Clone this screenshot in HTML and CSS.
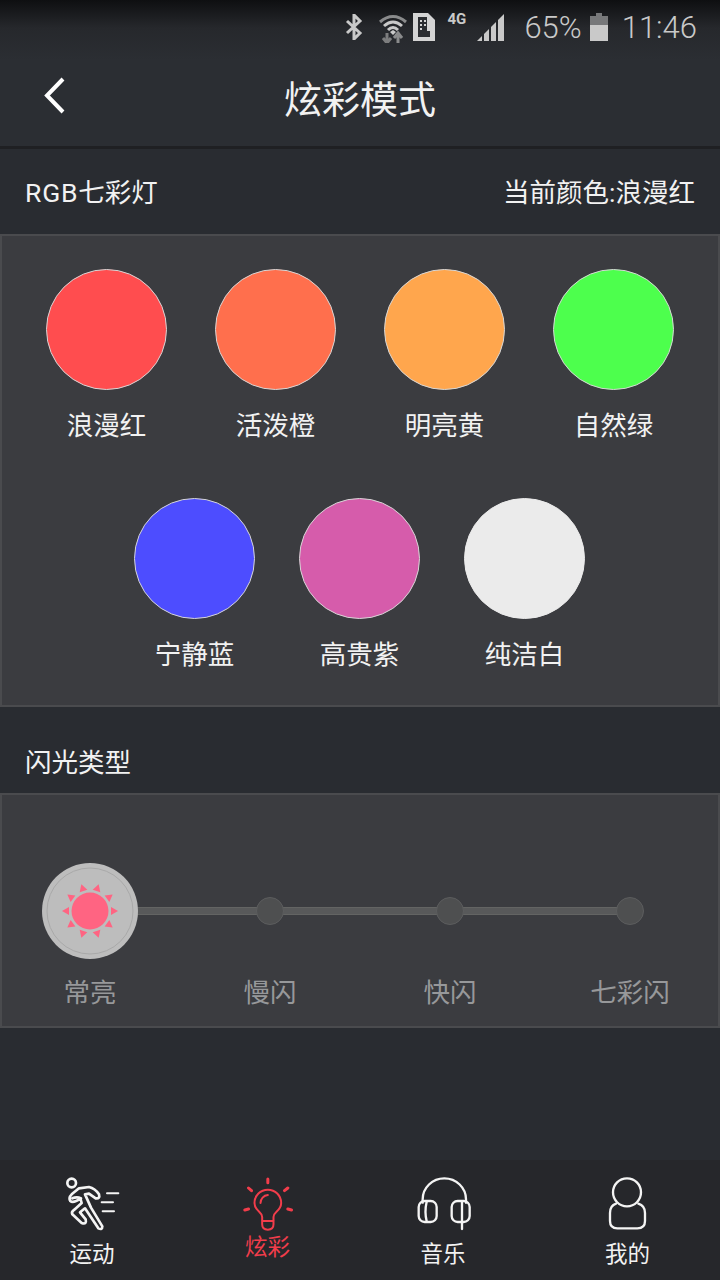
FILE: index.html
```html
<!DOCTYPE html>
<html lang="zh-CN">
<head>
  <meta charset="UTF-8">
  <meta name="viewport" content="width=device-width, initial-scale=1.0">
  <link rel="stylesheet" href="styles.css">
</head>
<body>

<div class="app">
  <div class="top-area">
    <div class="status-bar">
      <svg class="st-bt" viewBox="0 0 18 26" width="18" height="26"><path d="M2 7 L15 19 L9 25 V1 L15 7 L2 19" fill="none" stroke="#c9c9c9" stroke-width="3"/></svg>
      <svg class="st-wifi" viewBox="0 0 28 30" width="28" height="30">
        <path d="M1 9 Q14 -2 27 9" fill="none" stroke="#8a8b8c" stroke-width="3"/>
        <path d="M5 13 Q14 5 23 13" fill="none" stroke="#c9c9c9" stroke-width="3"/>
        <path d="M9 17 Q14 12 19 17" fill="none" stroke="#c9c9c9" stroke-width="3"/>
        <path d="M11 19 L14 17 L17 19 L14 22 Z" fill="#c9c9c9"/>
        <path d="M8 20 V30 M4 25 L8 30 L12 25" fill="none" stroke="#7c7d7e" stroke-width="3"/>
        <path d="M19 30 V20 M15 25 L19 20 L23 25" fill="none" stroke="#8a8b8c" stroke-width="3"/>
      </svg>
      <svg class="st-sim" viewBox="0 0 22 28" width="22" height="28">
        <path d="M0 0 H15 L22 7 V28 H0 Z" fill="#d4d4d4"/>
        <path d="M5 4 H14 V18 H17 V24 H5 Z" fill="#2b2d31"/>
        <path d="M7 7 h2 v2 h-2 Z M11 7 h2 v2 h-2 Z M7 11 h2 v2 h-2 Z M11 11 h2 v2 h-2 Z M7 15 h2 v2 h-2 Z" fill="#d4d4d4"/>
      </svg>
      <span class="st-net">4G</span>
      <svg class="st-signal" viewBox="0 0 28 28" width="28" height="28">
        <path d="M0 28 L5 23 V28 Z" fill="#c9c9c9"/>
        <path d="M7 21 L12 16 V28 H7 Z" fill="#c9c9c9"/>
        <path d="M14 14 L19 9 V28 H14 Z" fill="#c9c9c9"/>
        <path d="M21 7 L27 1 V28 H21 Z" fill="#c9c9c9"/>
      </svg>
      <span class="st-pct">65%</span>
      <svg class="st-batt" viewBox="0 0 18 28" width="18" height="28">
        <path d="M6 0 H12 V3 H18 V12 H0 V3 H6 Z" fill="#77787a"/>
        <rect x="0" y="12" width="18" height="16" fill="#c9c9c9"/>
      </svg>
      <span class="st-time">11:46</span>
    </div>
    <div class="title-bar">
      <svg class="back" viewBox="0 0 24 38" width="24" height="38"><path d="M20 2 L4 18.500 L20 35" fill="none" stroke="#fff" stroke-width="4"/></svg>
      <h1 class="title">炫彩模式</h1>
    </div>
  </div>

  <div class="section-head">
    <span><span class="latin">RGB</span>七彩灯</span>
    <span>当前颜色:浪漫红</span>
  </div>

  <div class="panel colors">
    <div class="color-row">
      <div class="swatch"><i class="dot c-red"></i><span>浪漫红</span></div>
      <div class="swatch"><i class="dot c-orange"></i><span>活泼橙</span></div>
      <div class="swatch"><i class="dot c-yellow"></i><span>明亮黄</span></div>
      <div class="swatch"><i class="dot c-green"></i><span>自然绿</span></div>
    </div>
    <div class="color-row second">
      <div class="swatch"><i class="dot c-blue"></i><span>宁静蓝</span></div>
      <div class="swatch"><i class="dot c-purple"></i><span>高贵紫</span></div>
      <div class="swatch"><i class="dot c-white"></i><span>纯洁白</span></div>
    </div>
  </div>

  <div class="section-head low">
    <span>闪光类型</span>
  </div>

  <div class="panel flash">
    <div class="track"></div>
    <div class="stops">
      <div class="stop">
        <div class="stop-mark">
          <svg viewBox="-48 -48 96 96" width="96" height="96">
            <circle r="48" fill="#bdbdbd"/>
            <circle r="43" fill="none" stroke="#a9a9a9" stroke-width="1"/>
            <circle r="18.500" fill="#ff6482"/>
            <g fill="#ff6482">
              <polygon points="-4,-21 4,-21 0,-28" transform="rotate(18)"/>
              <polygon points="-4,-21 4,-21 0,-28" transform="rotate(54)"/>
              <polygon points="-4,-21 4,-21 0,-28" transform="rotate(90)"/>
              <polygon points="-4,-21 4,-21 0,-28" transform="rotate(126)"/>
              <polygon points="-4,-21 4,-21 0,-28" transform="rotate(162)"/>
              <polygon points="-4,-21 4,-21 0,-28" transform="rotate(198)"/>
              <polygon points="-4,-21 4,-21 0,-28" transform="rotate(234)"/>
              <polygon points="-4,-21 4,-21 0,-28" transform="rotate(270)"/>
              <polygon points="-4,-21 4,-21 0,-28" transform="rotate(306)"/>
              <polygon points="-4,-21 4,-21 0,-28" transform="rotate(342)"/>
            </g>
          </svg>
        </div>
        <span>常亮</span>
      </div>
      <div class="stop"><div class="stop-mark"><i class="knob"></i></div><span>慢闪</span></div>
      <div class="stop"><div class="stop-mark"><i class="knob"></i></div><span>快闪</span></div>
      <div class="stop"><div class="stop-mark"><i class="knob"></i></div><span>七彩闪</span></div>
    </div>
  </div>

  <div class="spacer"></div>

  <div class="tabbar">
    <div class="tab tab-run">
      <svg viewBox="190 75 165 165" width="55" height="55" fill="none" stroke="#f4f4f4" stroke-width="8" stroke-linecap="round" stroke-linejoin="round">
        <circle cx="210" cy="96" r="13"/>
        <path d="M232 112 L262 108 Q280 112 292 130 Q296 144 282 142 L262 128 L250 130 L268 170 L302 226 Q302 238 290 232 L250 172 L235 184 L252 205 Q256 222 240 216 L212 190 Q208 182 218 176 L240 156 L236 142 Q215 158 206 150 Q200 140 210 130 Z"/>
        <path d="M212 142 Q226 136 238 142"/>
        <path d="M316 127 H350 M300 154 H334 M303 181 H337" stroke-width="6"/>
      </svg>
      <span>运动</span>
    </div>
    <div class="tab tab-light active">
      <svg viewBox="725 80 155 165" width="52" height="55" fill="none" stroke="#f23d4b" stroke-width="6" stroke-linecap="round" stroke-linejoin="round">
        <path d="M785 210 V200 Q785 192 776 184 Q762 172 762 158 A40 40 0 0 1 842 158 Q842 172 828 184 Q819 192 819 200 V210"/>
        <path d="M785 212 H819 V222 Q819 238 802 238 Q785 238 785 222 Z"/>
        <path d="M780 158 A24 24 0 0 1 802 134"/>
        <path d="M802 86 V97 M744 113 L753 121 M862 113 L852 121 M733 179 L744 176 M873 179 L862 176" stroke-width="9"/>
      </svg>
      <span>炫彩</span>
    </div>
    <div class="tab tab-music">
      <svg viewBox="165 75 165 165" width="55" height="55" fill="none" stroke="#f4f4f4" stroke-width="7" stroke-linecap="round" stroke-linejoin="round">
        <path d="M185 155 V145 A65 63 0 0 1 315 145 V155"/>
        <rect x="173" y="150" width="54" height="63" rx="18"/>
        <path d="M197 152 Q190 182 197 211"/>
        <rect x="272" y="150" width="54" height="63" rx="18"/>
        <path d="M303 152 V234"/>
      </svg>
      <span>音乐</span>
    </div>
    <div class="tab tab-me">
      <svg viewBox="720 75 165 165" width="55" height="55" fill="none" stroke="#f4f4f4" stroke-width="7" stroke-linecap="round" stroke-linejoin="round">
        <circle cx="801" cy="124" r="42"/>
        <path d="M768 158 Q750 164 750 186 V210 Q750 232 772 232 H832 Q855 232 855 210 V186 Q855 164 835 158"/>
      </svg>
      <span>我的</span>
    </div>
  </div>
</div>

</body>
</html>
```

FILE: styles.css
```css
* {
  box-sizing: border-box;
}

body {
  margin: 0;
  background-color: #292c31;
  color: #f2f2f2;
  font-family: 'Roboto', 'Noto Sans CJK SC', sans-serif;
}

.app {
  width: 720px;
  height: 1280px;
  display: flex;
  flex-direction: column;
  overflow: hidden;
}

/* top */
.top-area {
  height: 149px;
  background: linear-gradient(to bottom, #0e0f11 0, #26282c 28px, #2b2e33 60px);
  border-bottom: 3px solid #1f2023;
}

.status-bar {
  height: 54px;
  display: flex;
  align-items: center;
  justify-content: flex-end;
  padding-right: 23px;
  color: #c9c9c9;
}

.st-bt { margin-right: 16px; }
.st-wifi { margin-right: 6px; margin-top: 2px; }
.st-sim { margin-right: 12px; }
.st-net {
  width: 22px;
  margin-right: 8px;
  margin-bottom: 16px;
  font-size: 15px;
  font-weight: 700;
}
.st-signal { margin-right: 19px; }
.st-pct { font-size: 31px; font-weight: 300; margin-right: 8px; }
.st-batt { margin-right: 14px; }
.st-time { font-size: 31px; font-weight: 300; }

.title-bar {
  position: relative;
  height: 94px;
  display: flex;
  align-items: center;
  justify-content: center;
  margin-top: -5px;
}

.back {
  position: absolute;
  left: 43px;
  top: 28px;
}

.title {
  margin: 0;
  font-size: 38px;
  font-weight: 400;
}

/* sections */
.section-head {
  height: 85px;
  padding: 0 25px 2px;
  display: flex;
  align-items: center;
  justify-content: space-between;
  font-size: 26.500px;
}

.section-head.low {
  height: 86px;
  padding-top: 20px;
  padding-bottom: 0;
}

.latin {
  letter-spacing: 0.8px;
}

.panel {
  background-color: #3b3c40;
  border: 2px solid #4a4b4e;
}

.colors {
  height: 473px;
  padding-top: 33px;
}

.color-row {
  display: flex;
  justify-content: center;
}

.second {
  margin-top: 52px;
  padding-right: 1px;
}

.swatch {
  width: 169px;
  display: flex;
  flex-direction: column;
  align-items: center;
  font-size: 26.500px;
}

.second .swatch {
  width: 165px;
}

.swatch span {
  margin-top: 16px;
  line-height: 40px;
}

.dot {
  display: block;
  width: 121px;
  height: 121px;
  border-radius: 50%;
  border: 1px solid #d6d6d6;
}

.c-red { background-color: #ff4d4f; }
.c-orange { background-color: #ff6f4d; }
.c-yellow { background-color: #ffa64d; }
.c-green { background-color: #4dff4d; }
.c-blue { background-color: #4d4dff; }
.c-purple { background-color: #d65cab; }
.c-white { background-color: #ebebeb; border-color: #ebebeb; }

/* flash type */
.flash {
  position: relative;
  height: 235px;
  padding-top: 68px;
}

.track {
  position: absolute;
  left: 88px;
  right: 88px;
  top: 112px;
  height: 8px;
  background-color: #58595a;
  border-top: 1px solid #636463;
  border-bottom: 1px solid #636463;
}

.stops {
  position: relative;
  display: grid;
  grid-template-columns: repeat(4, 1fr);
  margin: 0 -2px;
}

.stop {
  display: flex;
  flex-direction: column;
  align-items: center;
  font-size: 26.500px;
  color: #97989a;
}

.stop-mark {
  height: 96px;
  display: flex;
  align-items: center;
  justify-content: center;
}

.stop span {
  margin-top: 14px;
  line-height: 40px;
}

.knob {
  display: block;
  width: 28px;
  height: 28px;
  border-radius: 50%;
  background-color: #4e4f50;
  border: 1px solid #5c5d5e;
}

.spacer {
  flex: 1;
}

/* bottom tabs */
.tabbar {
  height: 120px;
  background-color: #26272b;
  display: grid;
  grid-template-columns: 184px 167px 184px 185px;
}

.tab {
  display: flex;
  flex-direction: column;
  align-items: center;
  padding-top: 16px;
  font-size: 22.500px;
}

.tab span {
  line-height: 30px;
  margin-top: 8px;
}

.tab.active {
  color: #f23d4b;
  padding-top: 17px;
}

.tab.active span {
  margin-top: 0;
}
```
